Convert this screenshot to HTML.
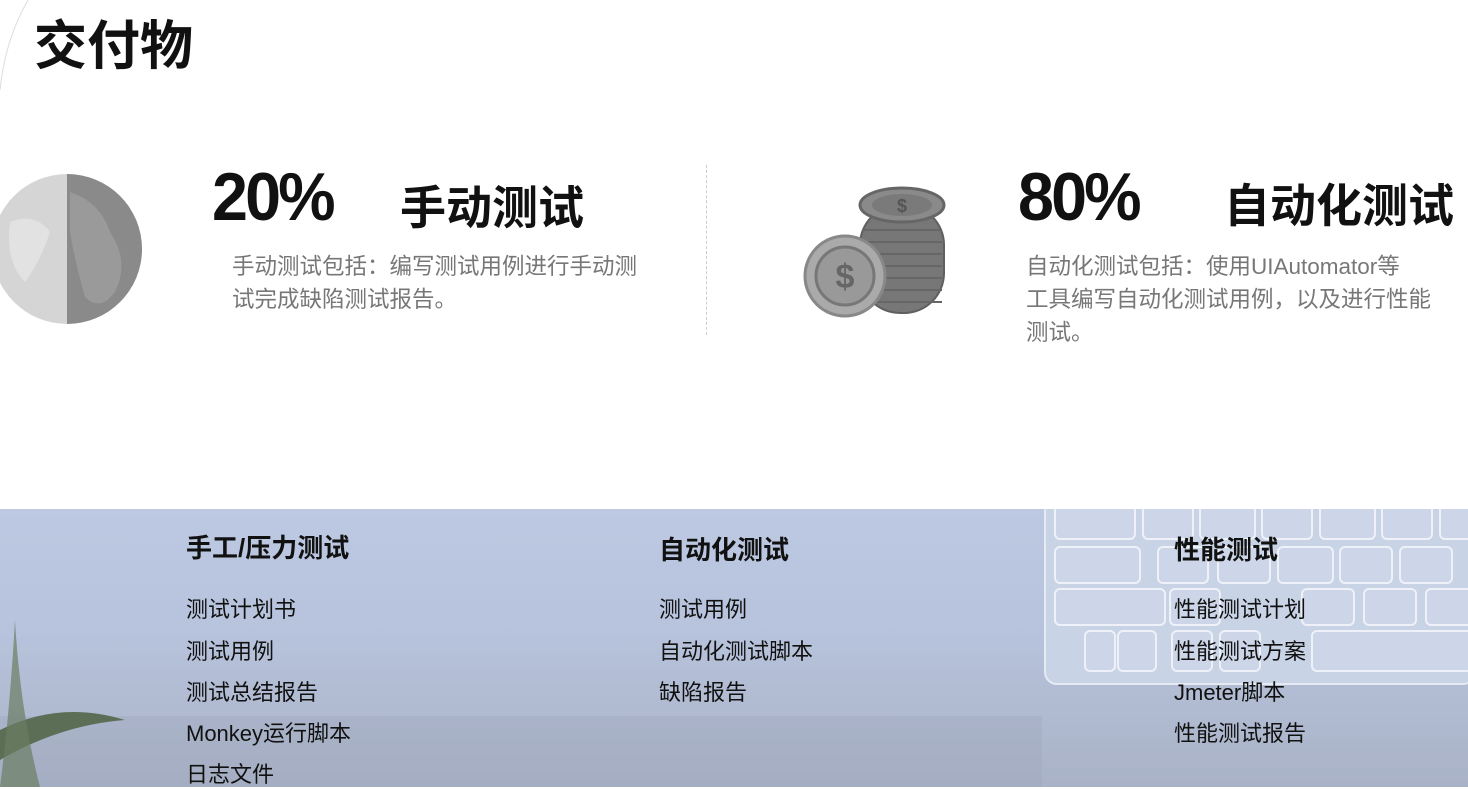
<!DOCTYPE html>
<html><head><meta charset="utf-8"><style>
*{margin:0;padding:0;box-sizing:border-box}
body{width:1468px;height:787px;overflow:hidden;background:#fff;position:relative;font-family:"Liberation Sans","Noto Sans CJK SC",sans-serif;color:#111}
.a{position:absolute;white-space:nowrap}
.h1{left:34px;top:4px;font-size:53px;font-weight:bold;letter-spacing:0px}
.pct{font-size:68px;font-weight:bold;letter-spacing:-3px;transform:scaleX(0.95);transform-origin:left}
.t{font-size:46px;font-weight:bold}
.d{font-size:22.5px;color:#777;line-height:33px}
.band{position:absolute;left:0;top:509px;width:1468px;height:278px;background:linear-gradient(#bdc9e2 0%,#b7c3dc 45%,#a9b2c6 100%)}
.hd{font-size:26px;font-weight:bold;color:#111}
.it{font-size:22px;color:#111}
</style></head><body>
<div class="a h1">交付物</div>
<svg class="a" style="left:0;top:0" width="30" height="90"><path d="M28 0 Q5 40 0 90" stroke="#ddd" fill="none"/></svg>
<svg class="a" style="left:-10px;top:172px" width="155" height="155">
<circle cx="77" cy="77" r="75" fill="#d5d5d5"/>
<path d="M77 2 A75 75 0 0 1 77 152 Z" fill="#8a8a8a"/>
<path d="M80 20 Q110 30 120 60 Q140 90 125 120 Q110 140 95 125 Q85 90 80 60Z" fill="#9a9a9a"/>
<path d="M20 50 Q45 40 60 60 Q50 90 35 110 Q15 90 20 50Z" fill="#e2e2e2"/>
</svg>
<div class="a pct" style="left:212px;top:158px">20%</div>
<div class="a t" style="left:400px;top:172px">手动测试</div>
<div class="a d" style="left:232px;top:250px">手动测试包括：编写测试用例进行手动测<br>试完成缺陷测试报告。</div>
<div class="a" style="left:706px;top:165px;height:170px;border-left:1px dashed #ccc"></div>
<svg class="a" style="left:800px;top:185px" width="150" height="135">
<rect x="60" y="20" width="84" height="108" rx="40" fill="#777" stroke="#5f5f5f" stroke-width="2"/>
<g stroke="#666" stroke-width="2" fill="none">
<path d="M62 45h80M62 57h80M62 69h80M62 81h80M62 93h80M62 105h80M62 117h80"/>
</g>
<ellipse cx="102" cy="20" rx="42" ry="17" fill="#8a8a8a" stroke="#666" stroke-width="3"/>
<ellipse cx="102" cy="20" rx="30" ry="11" fill="#7a7a7a"/>
<text x="102" y="27" font-size="18" font-weight="bold" fill="#555" text-anchor="middle">$</text>
<circle cx="45" cy="91" r="40" fill="#aaa" stroke="#888" stroke-width="3"/>
<circle cx="45" cy="91" r="29" fill="#999" stroke="#777" stroke-width="3"/>
<text x="45" y="103" font-size="34" font-weight="bold" fill="#666" text-anchor="middle">$</text>
</svg>
<div class="a pct" style="left:1018px;top:158px">80%</div>
<div class="a t" style="left:1224px;top:170px">自动化测试</div>
<div class="a d" style="left:1026px;top:250px">自动化测试包括：使用UIAutomator等<br>工具编写自动化测试用例，以及进行性能<br>测试。</div>
<div class="band"></div>
<svg class="a" style="left:1040px;top:509px" width="428" height="180">
<rect x="5" y="-10" width="430" height="185" rx="12" fill="#c9d3e6" stroke="#e6ebf3" stroke-width="2"/>
<g fill="#cdd6e8" stroke="#eef2f8" stroke-width="2">
<rect x="15" y="-5" width="80" height="35" rx="5"/><rect x="103" y="-5" width="50" height="35" rx="5"/><rect x="160" y="-5" width="55" height="35" rx="5"/><rect x="222" y="-5" width="50" height="35" rx="5"/><rect x="280" y="-5" width="55" height="35" rx="5"/><rect x="342" y="-5" width="50" height="35" rx="5"/><rect x="400" y="-5" width="50" height="35" rx="5"/>
<rect x="15" y="38" width="85" height="36" rx="5"/><rect x="118" y="38" width="50" height="36" rx="5"/><rect x="178" y="38" width="52" height="36" rx="5"/><rect x="238" y="38" width="55" height="36" rx="5"/><rect x="300" y="38" width="52" height="36" rx="5"/><rect x="360" y="38" width="52" height="36" rx="5"/>
<rect x="15" y="80" width="110" height="36" rx="5"/><rect x="130" y="80" width="50" height="36" rx="5"/><rect x="262" y="80" width="52" height="36" rx="5"/><rect x="324" y="80" width="52" height="36" rx="5"/><rect x="386" y="80" width="52" height="36" rx="5"/>
<rect x="45" y="122" width="30" height="40" rx="5"/><rect x="78" y="122" width="38" height="40" rx="5"/><rect x="132" y="122" width="40" height="40" rx="5"/><rect x="180" y="122" width="40" height="40" rx="5"/><rect x="272" y="122" width="160" height="40" rx="5"/>
</g></svg>
<div class="a" style="left:0;top:716px;width:1042px;height:71px;background:rgba(150,160,180,0.25)"></div>
<svg class="a" style="left:0;top:560px" width="130" height="227"><path d="M0 170 Q60 140 125 160 Q60 165 0 200Z" fill="#5c6e55"/><path d="M0 227 Q10 150 15 60 Q20 150 40 227Z" fill="#6b7d62" opacity=".7"/></svg>
<div class="a hd" style="left:186px;top:528px">手工/压力测试</div>
<div class="a it" style="left:186px;top:592px">测试计划书</div>
<div class="a it" style="left:186px;top:634px">测试用例</div>
<div class="a it" style="left:186px;top:675px">测试总结报告</div>
<div class="a it" style="left:186px;top:716px">Monkey运行脚本</div>
<div class="a it" style="left:186px;top:757px">日志文件</div>
<div class="a hd" style="left:659px;top:530px">自动化测试</div>
<div class="a it" style="left:659px;top:592px">测试用例</div>
<div class="a it" style="left:659px;top:634px">自动化测试脚本</div>
<div class="a it" style="left:659px;top:675px">缺陷报告</div>
<div class="a hd" style="left:1174px;top:530px">性能测试</div>
<div class="a it" style="left:1174px;top:592px">性能测试计划</div>
<div class="a it" style="left:1174px;top:634px">性能测试方案</div>
<div class="a it" style="left:1174px;top:675px">Jmeter脚本</div>
<div class="a it" style="left:1174px;top:716px">性能测试报告</div>
</body></html>
